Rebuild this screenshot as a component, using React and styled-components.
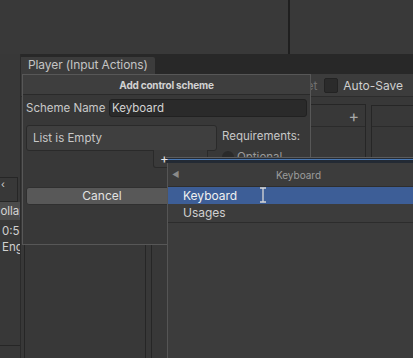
import React from "react";
import styled, { createGlobalStyle } from "styled-components";

const GlobalStyle = createGlobalStyle`
  html, body {
    margin: 0;
    padding: 0;
    background: #383838;
  }
  body {
    font-family: Inter, "Noto Sans", sans-serif;
    font-size: 11.5px;
    color: #c4c4c4;
  }
`;

const Desktop = styled.div`
  position: relative;
  width: 413px;
  height: 358px;
  overflow: hidden;
  background: #393939;
`;

const TopSplit = styled.div`
  display: flex;
  height: 54px;
`;

const TopPane = styled.div`
  flex: ${(p) => (p.$w ? `0 0 ${p.$w}px` : "1")};
  background: #393939;
`;

const Splitter = styled.div`
  width: 2px;
  background: #1f1f1f;
`;

/* window peeking in from the left edge */
const SideWindow = styled.div`
  position: absolute;
  left: 0;
  top: 54px;
  width: 20px;
  bottom: 0;
  display: flex;
  flex-direction: column;
  background: #383838;
  border-right: 1px solid #2a2a2a;
  overflow: hidden;
`;

const SideHeader = styled.div`
  margin-top: 123px;
  height: 23px;
  border: 1px solid #262626;
  border-left: none;
  margin-right: 2px;
  color: #d0d0d0;
  font-size: 10px;
  padding-left: 1px;
  line-height: 12px;
`;

const SideStrip = styled.div`
  height: 18px;
  background: #4b4b4b;
  white-space: nowrap;
  line-height: 18px;
  color: #d6d6d6;
  text-indent: -8px;
`;

const SideText = styled.div`
  white-space: nowrap;
  padding-left: 2px;
  line-height: 16px;
  color: #d0d0d0;
  margin-top: ${(p) => p.$mt || 0}px;
`;

const SideFoot = styled.div`
  margin-top: auto;
  margin-bottom: 12px;
  height: 1px;
  background: #262626;
`;

/* main "Player (Input Actions)" window */
const MainWindow = styled.div`
  position: absolute;
  left: 21px;
  top: 54px;
  right: 0;
  bottom: 0;
  display: flex;
  flex-direction: column;
  background: #383838;
`;

const TabBar = styled.div`
  height: 20px;
  background: #282828;
  display: flex;
  align-items: flex-end;
`;

const Tab = styled.div`
  width: 134px;
  height: 17px;
  background: #3c3c3c;
  border-top-right-radius: 2px;
  padding-left: 7px;
  box-sizing: border-box;
  line-height: 16px;
  white-space: nowrap;
  font-size: 12px;
  letter-spacing: -0.1px;
`;

const Toolbar = styled.div`
  height: 22px;
  background: #3c3c3c;
  border-bottom: 1px solid #2c2c2c;
  display: flex;
  align-items: center;
  justify-content: flex-end;
  padding-right: 10px;
`;

const Dim = styled.span`
  color: #6f6f6f;
  font-size: 12px;
  margin-right: 7px;
`;

const Check = styled.span`
  width: 12px;
  height: 13px;
  border-radius: 2px;
  background: #2b2b2b;
  border: 1px solid #232323;
  margin-right: 5px;
`;

const ToolLabel = styled.span`
  font-size: 12px;
  color: #cfcfcf;
`;

const Panels = styled.div`
  flex: 1;
  display: flex;
  gap: 5px;
  padding: 7px 0 0 3px;
`;

const Panel = styled.div`
  flex: ${(p) => (p.$w ? `0 0 ${p.$w}px` : "1")};
  margin-right: ${(p) => p.$mr || 0}px;
  margin-top: ${(p) => p.$mt || 0}px;
  border: 1px solid #262626;
  border-bottom: none;
  display: flex;
  flex-direction: column;
`;

const PanelHead = styled.div`
  height: ${(p) => p.$h || 21}px;
  border-bottom: 1px solid #2b2b2b;
  display: flex;
  align-items: center;
  justify-content: flex-end;
  padding-right: 6px;
  color: #a8a8a8;
  font-size: 16px;
`;

/* "Add control scheme" popup */
const Popup = styled.div`
  position: absolute;
  left: 22px;
  top: 74px;
  width: 289px;
  height: 171px;
  box-sizing: border-box;
  border: 1px solid #575757;
  background: #383838;
  display: flex;
  flex-direction: column;
`;

const PopupTitle = styled.div`
  height: 19px;
  background: #3e3e3e;
  border-bottom: 1px solid #2a2a2a;
  font-size: 10px;
  font-weight: 700;
  letter-spacing: -0.2px;
  color: #d2d2d2;
  display: flex;
  align-items: center;
  justify-content: center;
`;

const PopupBody = styled.div`
  padding: 4px 3px 0 3px;
  display: flex;
  flex-direction: column;
`;

const FieldRow = styled.div`
  display: flex;
  align-items: center;
  height: 18px;
`;

const Label = styled.span`
  width: 83px;
  color: #c8c8c8;
  white-space: nowrap;
`;

const TextField = styled.div`
  flex: 1;
  height: 18px;
  box-sizing: border-box;
  background: #2a2a2a;
  border: 1px solid #212121;
  border-radius: 3px;
  padding-left: 2px;
  line-height: 16px;
  color: #d4d4d4;
`;

const SchemeRow = styled.div`
  display: flex;
  margin-top: 8px;
  gap: 5px;
`;

const ListColumn = styled.div`
  width: 191px;
  display: flex;
  flex-direction: column;
  align-items: flex-end;
`;

const ListBox = styled.div`
  align-self: stretch;
  height: 26px;
  box-sizing: border-box;
  background: #3f3f3f;
  border: 1px solid #2a2a2a;
  border-radius: 3px;
  padding-left: 6px;
  line-height: 24px;
  color: #c8c8c8;
`;

const ListFooter = styled.div`
  width: 55px;
  height: 18px;
  margin-top: -1px;
  margin-right: 9px;
  box-sizing: border-box;
  border: 1px solid #2a2a2a;
  border-top: none;
  border-radius: 0 0 3px 3px;
  background: #3a3a3a;
`;

const ReqColumn = styled.div`
  display: flex;
  flex-direction: column;
  padding-top: 4px;
  color: #c8c8c8;
  white-space: nowrap;
`;

const Radio = styled.div`
  display: flex;
  align-items: center;
  gap: 3px;
  margin-top: 7px;
  color: #9a9a9a;
  &::before {
    content: "";
    width: 12px;
    height: 12px;
    border-radius: 50%;
    background: #2a2a2a;
  }
`;

const ButtonRow = styled.div`
  display: flex;
  margin-top: 19px;
`;

const Button = styled.div`
  width: 150px;
  height: 16px;
  background: #585858;
  border: 1px solid #303030;
  border-radius: 3px;
  text-align: center;
  line-height: 16px;
  color: #e2e2e2;
  font-size: 12px;
`;

/* focused field strip and the dropdown over everything */
const FocusStrip = styled.div`
  position: absolute;
  left: 166px;
  top: 157px;
  right: 0;
  height: 6px;
  background: #232a34;
  border-top: 1px solid #5c5c5c;
  box-sizing: border-box;
  display: flex;
  flex-direction: column;
  &::before {
    content: "";
    height: 1px;
    margin-top: 1px;
    background: #4a79b4;
  }
`;

const PlusMark = styled.span`
  position: absolute;
  left: 160px;
  top: 152px;
  color: #e8e8e8;
  font-size: 13px;
  line-height: 13px;
`;

const Dropdown = styled.div`
  position: absolute;
  left: 167px;
  top: 163px;
  right: 0;
  bottom: 0;
  background: #3c3c3c;
  border-left: 1px solid #555555;
  display: flex;
  flex-direction: column;
`;

const DropHead = styled.div`
  position: relative;
  height: 23px;
  border-bottom: 1px solid #2e2e2e;
  display: flex;
  align-items: center;
  justify-content: center;
  padding-left: 16px;
  font-size: 10px;
  color: #9c9c9c;
`;

const BackArrow = styled.span`
  position: absolute;
  left: 4px;
  top: 6px;
  font-size: 8px;
  color: #8a8a8a;
`;

const Item = styled.div`
  position: relative;
  height: 17px;
  line-height: 17px;
  padding-left: 15px;
  background: ${(p) => (p.$active ? "#3d5e97" : "transparent")};
  color: ${(p) => (p.$active ? "#f0f0f0" : "#d0d0d0")};
  font-size: 12px;
`;

const ItemSep = styled.div`
  height: 1px;
  margin-top: 1px;
  background: #2c2c2c;
`;

const Cursor = styled.svg`
  position: absolute;
  left: 91px;
  top: 0px;
`;

export default function App() {
  return (
    <>
      <GlobalStyle />
      <Desktop>
        <TopSplit>
          <TopPane $w={288} />
          <Splitter />
          <TopPane />
        </TopSplit>

        <SideWindow>
          <SideHeader>‹</SideHeader>
          <SideStrip>Collapse</SideStrip>
          <SideText $mt={3}>0:58</SideText>
          <SideText>Eng</SideText>
          <SideFoot />
        </SideWindow>

        <MainWindow>
          <TabBar>
            <Tab>Player (Input Actions)</Tab>
          </TabBar>
          <Toolbar>
            <Dim>Save Asset</Dim>
            <Check />
            <ToolLabel>Auto-Save</ToolLabel>
          </Toolbar>
          <Panels>
            <Panel $w={120}>
              <PanelHead />
            </Panel>
            <Panel $w={213}>
              <PanelHead>+</PanelHead>
            </Panel>
            <Panel $mt={1} $mr={-2}>
              <PanelHead $h={20} />
            </Panel>
          </Panels>
        </MainWindow>

        <Popup>
          <PopupTitle>Add control scheme</PopupTitle>
          <PopupBody>
            <FieldRow>
              <Label>Scheme Name</Label>
              <TextField>Keyboard</TextField>
            </FieldRow>
            <SchemeRow>
              <ListColumn>
                <ListBox>List is Empty</ListBox>
                <ListFooter />
              </ListColumn>
              <ReqColumn>
                Requirements:
                <Radio>Optional</Radio>
              </ReqColumn>
            </SchemeRow>
            <ButtonRow>
              <Button>Cancel</Button>
            </ButtonRow>
          </PopupBody>
        </Popup>

        <FocusStrip />
        <PlusMark>+</PlusMark>

        <Dropdown>
          <DropHead>
            <BackArrow>◀</BackArrow>
            Keyboard
          </DropHead>
          <Item $active>
            Keyboard
            <Cursor width="8" height="16" viewBox="0 0 8 16">
              <path
                d="M1 1h6M4 1v14M1 15h6"
                stroke="#d8d8d8"
                strokeWidth="1.3"
                fill="none"
              />
            </Cursor>
          </Item>
          <Item>Usages</Item>
          <ItemSep />
        </Dropdown>
      </Desktop>
    </>
  );
}
